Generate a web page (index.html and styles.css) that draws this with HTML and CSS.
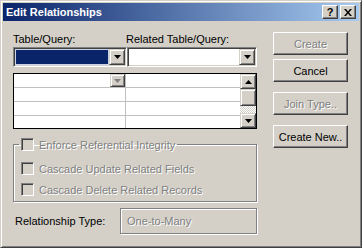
FILE: index.html
```html
<!DOCTYPE html>
<html lang="en">
<head>
  <meta charset="UTF-8" />
  <title>Edit Relationships</title>
  <link rel="stylesheet" href="styles.css">
</head>
<body>

  <div class="window">
    <div class="titlebar">
      <span class="title">Edit Relationships</span>
      <span class="caption-btns">
        <span class="cap-btn help">?</span>
        <span class="cap-btn close">
          <svg width="8" height="7" viewBox="0 0 8 7"><path d="M0 0h2l2 2.5L6 0h2L5 3.5 8 7H6L4 4.5 2 7H0l3-3.5z"/></svg>
        </span>
      </span>
    </div>

    <div class="content">
      <div class="main">
        <div class="labels">
          <span class="lbl-left">Table/Query:</span>
          <span>Related Table/Query:</span>
        </div>

        <div class="combos">
          <div class="combo combo-left">
            <span class="combo-field selected"></span>
            <span class="drop-btn"><svg width="7" height="4"><path d="M0 0h7L3.5 4z"/></svg></span>
          </div>
          <div class="combo combo-right">
            <span class="combo-field"></span>
            <span class="drop-btn"><svg width="7" height="4"><path d="M0 0h7L3.5 4z"/></svg></span>
          </div>
        </div>

        <div class="grid">
          <div class="grid-rows">
            <div class="grid-row">
              <div class="cell cell-left"><span class="mini-drop"><svg width="7" height="4"><path d="M0 0h7L3.5 4z"/></svg></span></div>
              <div class="cell"></div>
            </div>
            <div class="grid-row"><div class="cell cell-left"></div><div class="cell"></div></div>
            <div class="grid-row"><div class="cell cell-left"></div><div class="cell"></div></div>
            <div class="grid-row"><div class="cell cell-left"></div><div class="cell"></div></div>
          </div>
          <div class="scrollbar">
            <span class="sb-btn"><svg width="7" height="4"><path d="M3.5 0L7 4H0z"/></svg></span>
            <span class="sb-thumb"></span>
            <span class="sb-track"></span>
            <span class="sb-btn"><svg width="7" height="4"><path d="M0 0h7L3.5 4z"/></svg></span>
          </div>
        </div>

        <fieldset class="group">
          <legend><span class="check"></span>Enforce Referential Integrity</legend>
          <div class="check-row"><span class="check"></span>Cascade Update Related Fields</div>
          <div class="check-row second"><span class="check"></span>Cascade Delete Related Records</div>
        </fieldset>

        <div class="reltype">
          <span class="reltype-label">Relationship Type:</span>
          <span class="reltype-box">One-to-Many</span>
        </div>
      </div>

      <div class="buttons">
        <span class="btn disabled">Create</span>
        <span class="btn gap-sm">Cancel</span>
        <span class="btn disabled gap-lg">Join Type..</span>
        <span class="btn gap-lg">Create New..</span>
      </div>
    </div>
  </div>

</body>
</html>
```

FILE: styles.css
```css
body {
  margin: 0;
  font-family: "Liberation Sans", Arial, sans-serif;
  font-size: 11px;
  color: #000;
}

.window {
  width: 362px;
  height: 248px;
  box-sizing: border-box;
  background: #d4d0c8;
  border: 1px solid;
  border-color: #d4d0c8 #404040 #404040 #d4d0c8;
  box-shadow: inset 1px 1px #fff, inset -1px -1px #808080;
  padding: 2px;
  display: flex;
  flex-direction: column;
}

.titlebar {
  height: 18px;
  display: flex;
  align-items: center;
  justify-content: space-between;
  padding: 0 3px 0 3px;
  background: linear-gradient(to right, #0a246a, #a6caf0);
}

.title {
  color: #fff;
  font-weight: bold;
  font-size: 11px;
}

.caption-btns {
  display: flex;
  gap: 2px;
}

.cap-btn {
  width: 16px;
  height: 14px;
  box-sizing: border-box;
  display: flex;
  align-items: center;
  justify-content: center;
  background: #d4d0c8;
  border: 1px solid;
  border-color: #fff #404040 #404040 #fff;
  box-shadow: inset -1px -1px #808080;
  font-weight: bold;
  font-size: 11px;
  line-height: 1;
}

.content {
  display: flex;
  padding: 11px 0 0 10px;
}

.main {
  width: 244px;
}

.labels {
  display: flex;
  margin-top: 1px;
  line-height: 13px;
}

.lbl-left {
  width: 113px;
}

.combos {
  display: flex;
  margin-top: 1px;
}

.combo {
  height: 20px;
  box-sizing: border-box;
  display: flex;
  padding: 1px;
  background: #fff;
  border: 1px solid;
  border-color: #808080 #fff #fff #808080;
  box-shadow: inset 1px 1px #404040, inset -1px -1px #d4d0c8;
}

.combo-left {
  width: 114px;
}

.combo-right {
  width: 130px;
}

.combo-field {
  flex: 1;
  background: #fff;
}

.combo-field.selected {
  background: #0a246a;
  box-shadow: inset 0 0 0 1px #c9d2e8;
}

.drop-btn,
.sb-btn,
.mini-drop,
.sb-thumb {
  box-sizing: border-box;
  display: flex;
  align-items: center;
  justify-content: center;
  background: #d4d0c8;
  border: 1px solid;
  border-color: #d4d0c8 #404040 #404040 #d4d0c8;
  box-shadow: inset 1px 1px #fff, inset -1px -1px #808080;
}

.drop-btn {
  width: 16px;
  height: 16px;
}

.grid {
  margin-top: 6px;
  height: 56px;
  box-sizing: border-box;
  border: 1px solid #000;
  display: flex;
}

.grid-rows {
  flex: 1;
  background: #fff;
  display: flex;
  flex-direction: column;
}

.grid-row {
  height: 14px;
  box-sizing: border-box;
  border-bottom: 1px solid #c0c0c0;
  display: flex;
}

.grid-row:last-child {
  height: 12px;
  border-bottom: none;
}

.cell {
  flex: 1;
}

.cell-left {
  flex: none;
  width: 112px;
  box-sizing: border-box;
  border-right: 1px solid #c0c0c0;
  display: flex;
  justify-content: flex-end;
}

.mini-drop {
  width: 15px;
  height: 13px;
}

.mini-drop svg {
  fill: #808080;
}

.scrollbar {
  width: 16px;
  display: flex;
  flex-direction: column;
}

.sb-btn {
  height: 15px;
}

.sb-thumb {
  height: 17px;
}

.sb-track {
  height: 7px;
  background: repeating-conic-gradient(#fff 0 25%, #d4d0c8 0 50%) 0 0 / 2px 2px;
}

.group {
  margin: 9px 0 0 0;
  width: 244px;
  box-sizing: border-box;
  padding: 11px 6px 5px 7px;
  border: 1px solid #808080;
  box-shadow: inset 1px 1px #fff, 1px 1px #fff;
  color: #808080;
  text-shadow: 1px 1px 0 #fff;
}

.group legend {
  display: flex;
  align-items: center;
  gap: 5px;
  height: 13px;
  padding: 0 2px;
  margin-left: -2px;
}

.check-row {
  display: flex;
  align-items: center;
  gap: 5px;
  height: 13px;
}

.check-row.second {
  margin-top: 8px;
}

.check {
  width: 13px;
  height: 13px;
  box-sizing: border-box;
  background: #d4d0c8;
  border: 1px solid;
  border-color: #808080 #fff #fff #808080;
  box-shadow: inset 1px 1px #404040, inset -1px -1px #d4d0c8;
}

.reltype {
  display: flex;
  align-items: center;
  margin-top: 6px;
  height: 26px;
}

.reltype-label {
  width: 105px;
  padding-left: 2px;
}

.reltype-box {
  flex: 1;
  height: 26px;
  box-sizing: border-box;
  display: flex;
  align-items: center;
  padding-left: 6px;
  border: 1px solid #808080;
  box-shadow: inset 1px 1px #fff, 1px 1px #fff;
  color: #808080;
  text-shadow: 1px 1px 0 #fff;
}

.buttons {
  margin-left: 16px;
  width: 75px;
  display: flex;
  flex-direction: column;
}

.btn {
  height: 23px;
  box-sizing: border-box;
  display: flex;
  align-items: center;
  justify-content: center;
  background: #d4d0c8;
  border: 1px solid;
  border-color: #fff #404040 #404040 #fff;
  box-shadow: inset -1px -1px #808080;
}

.btn.disabled {
  color: #808080;
  text-shadow: 1px 1px 0 #fff;
}

.gap-sm {
  margin-top: 4px;
}

.gap-lg {
  margin-top: 10px;
}
```
